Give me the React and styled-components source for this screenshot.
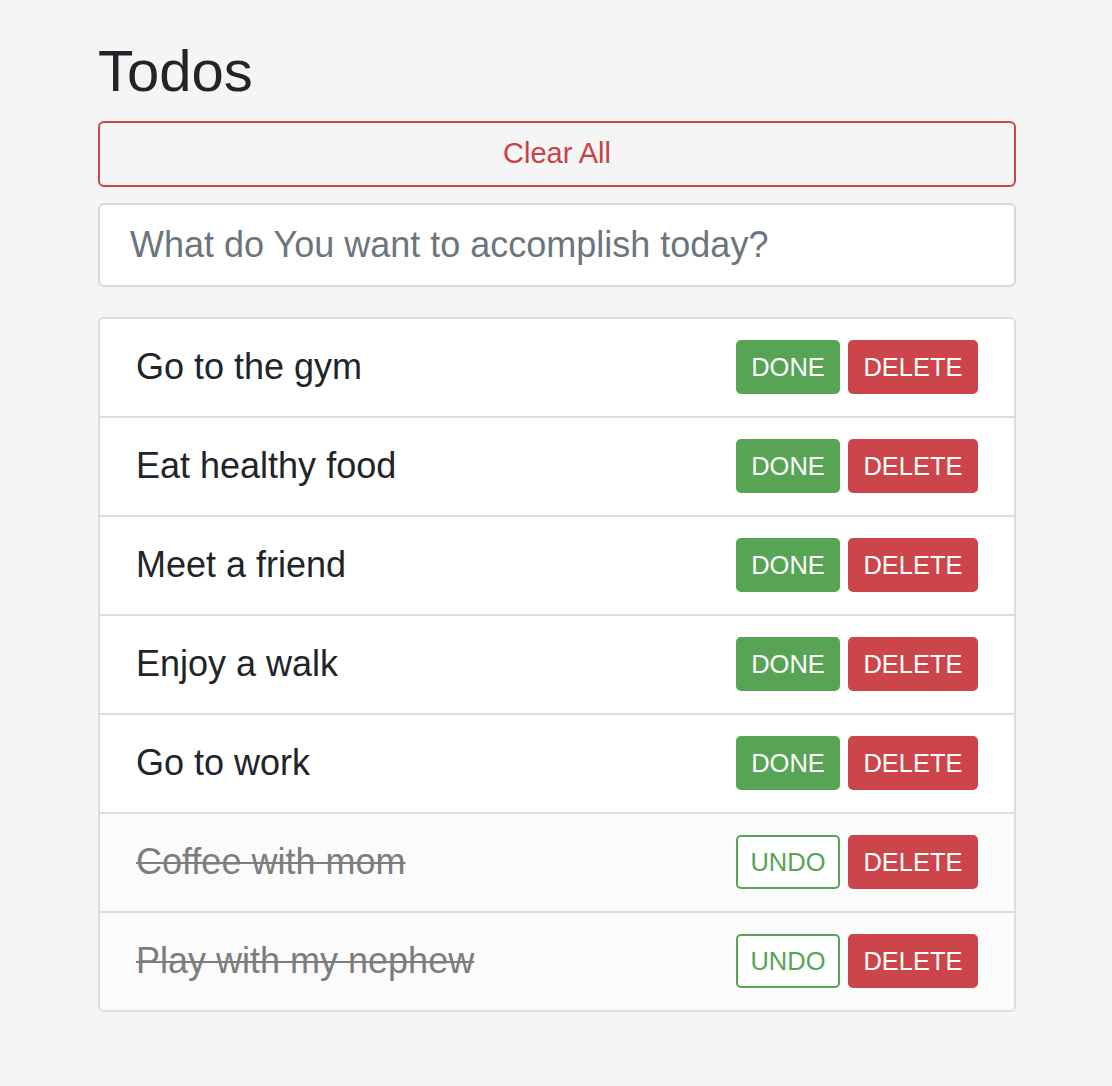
import styled, { createGlobalStyle } from 'styled-components';

const GlobalStyle = createGlobalStyle`
  body {
    margin: 0;
    background: #f5f5f5;
    font-family: "Liberation Sans", Arial, Helvetica, sans-serif;
    color: #212529;
  }
`;

const Page = styled.div`
  width: 918px;
  margin: 0 96px 0 98px;
  padding-top: 36px;
  padding-bottom: 40px;
`;

const Title = styled.h1`
  margin: 0 0 15px;
  font-size: 58px;
  line-height: 1.2;
  font-weight: 400;
  color: #212529;
`;

const ClearButton = styled.button`
  display: block;
  width: 100%;
  height: 66px;
  margin: 0 0 16px;
  background: transparent;
  border: 2px solid #cc454b;
  border-radius: 6px;
  color: #cc3f47;
  font-family: inherit;
  font-size: 29px;
  cursor: pointer;
`;

const TodoInput = styled.input`
  display: block;
  box-sizing: border-box;
  width: 100%;
  height: 84px;
  margin: 0 0 30px;
  padding: 0 30px;
  background: #fff;
  border: 2px solid #d5d8dc;
  border-radius: 6px;
  font-family: inherit;
  font-size: 36px;
  color: #212529;
  outline: none;

  &::placeholder {
    color: #6c757d;
  }
`;

const List = styled.ul`
  margin: 0;
  padding: 0;
  list-style: none;
  border: 2px solid #dddddd;
  border-radius: 6px;
  overflow: hidden;
  background: #fff;
`;

const Row = styled.li`
  display: flex;
  align-items: center;
  justify-content: space-between;
  height: 97px;
  padding: 0 36px;
  background: ${p => (p.$done ? '#fbfbfb' : '#fff')};

  & + & {
    border-top: 2px solid #dddddd;
  }
`;

const Label = styled.span`
  font-size: 36px;
  color: ${p => (p.$done ? '#7d7d7d' : '#212529')};
  text-decoration: ${p => (p.$done ? 'line-through' : 'none')};
  text-decoration-thickness: 2px;
`;

const Actions = styled.div`
  display: flex;
  gap: 8px;
`;

const ActionButton = styled.button`
  box-sizing: border-box;
  height: 54px;
  padding: 0 12px;
  border-radius: 5px;
  font-family: inherit;
  font-size: 25.5px;
  cursor: pointer;
  border: 2px solid ${p => p.$color};
  background: ${p => (p.$outline ? '#fff' : p.$color)};
  color: ${p => (p.$outline ? p.$color : '#fff')};
  width: ${p => p.$width}px;
`;

const todos = [
  { text: 'Go to the gym', done: false },
  { text: 'Eat healthy food', done: false },
  { text: 'Meet a friend', done: false },
  { text: 'Enjoy a walk', done: false },
  { text: 'Go to work', done: false },
  { text: 'Coffee with mom', done: true },
  { text: 'Play with my nephew', done: true },
];

const GREEN = '#56a454';
const RED = '#cc454b';

const App = () => (
  <Page>
    <GlobalStyle />
    <Title>Todos</Title>
    <ClearButton>Clear All</ClearButton>
    <TodoInput placeholder="What do You want to accomplish today?" />
    <List>
      {todos.map((todo, index) => (
        <Row key={index} $done={todo.done}>
          <Label $done={todo.done}>{todo.text}</Label>
          <Actions>
            <ActionButton $color={GREEN} $outline={todo.done} $width={104}>
              {todo.done ? 'UNDO' : 'DONE'}
            </ActionButton>
            <ActionButton $color={RED} $width={130}>DELETE</ActionButton>
          </Actions>
        </Row>
      ))}
    </List>
  </Page>
);

export default App;
